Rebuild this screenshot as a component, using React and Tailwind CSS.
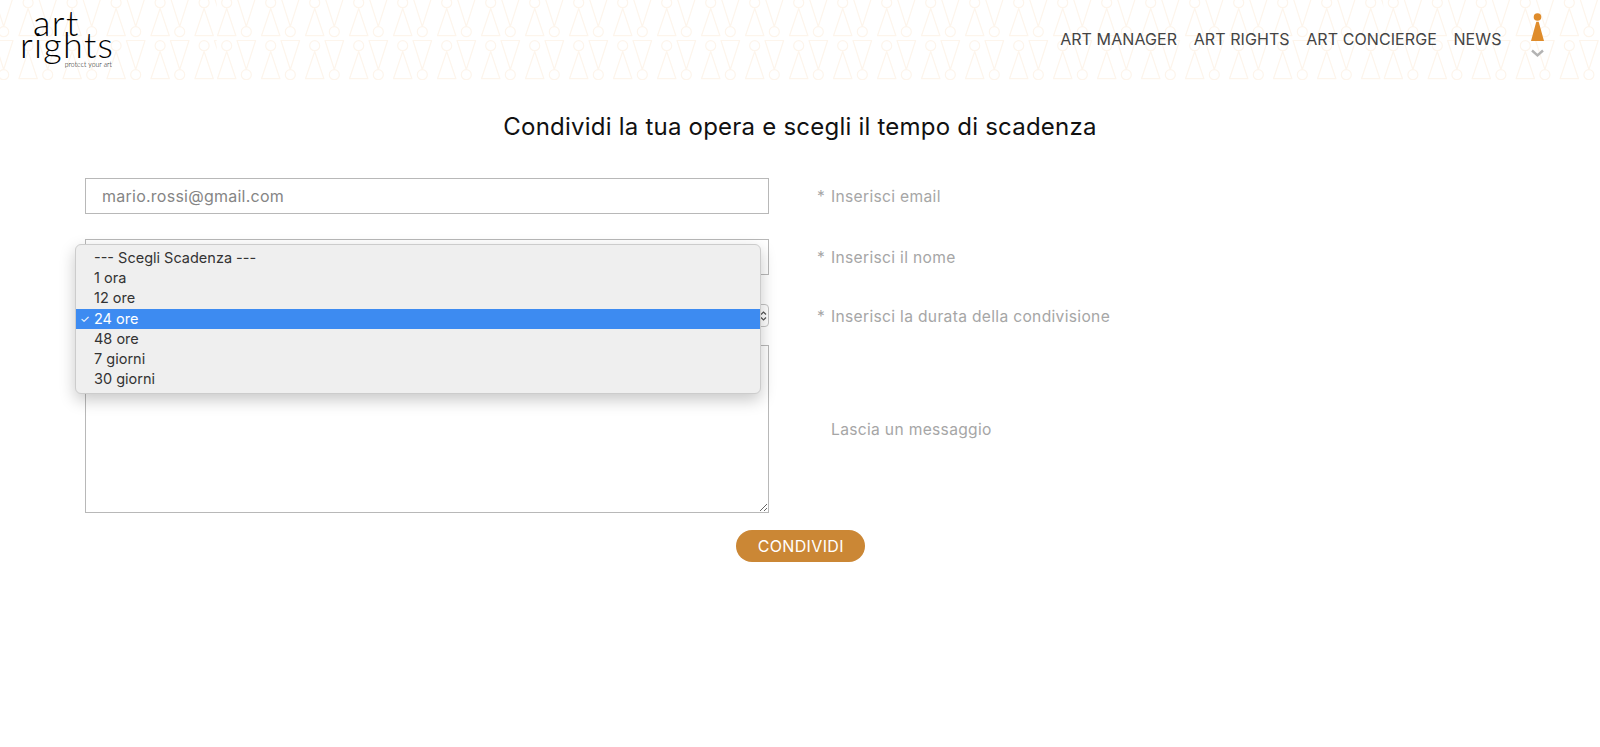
import React from "react";

const TILE = 1166.6;
const COLS = Array.from({ length: 27 }, (_, i) => i);

function PatternTile({ x }) {
  return (
    <svg x={x} y="0" width={TILE} height="80" viewBox={`0 0 ${TILE} 80`}>
      {COLS.map((i) => {
        const u = 10 + i * 44;
        const d = u + 19.6;
        return (
          <g key={i}>
            {[0, 43].map((o) => (
              <g key={o}>
                <circle cx={u} cy={2.7 + o} r="5" />
                <path d={`M${u} ${8.5 + o} L${u - 9.2} ${35.7 + o} H${u + 9.2} Z`} />
                <path d={`M${d - 9.3} ${-2.5 + o} H${d + 9.3} L${d} ${26.5 + o} Z`} />
                <circle cx={d} cy={31.7 + o} r="5" />
              </g>
            ))}
          </g>
        );
      })}
    </svg>
  );
}

function HeaderPattern() {
  return (
    <svg className="absolute inset-0 w-full h-20" width="1600" height="80" fill="none" stroke="#fdf5ec" strokeWidth="1.2" strokeLinejoin="round">
      <PatternTile x={-949.9} />
      <PatternTile x={216.7} />
      <PatternTile x={1383.3} />
    </svg>
  );
}

function Row({ label, box, h, mb }) {
  return (
    <div className={`flex items-center ${h} ${mb}`}>
      {box}
      <div className="ml-[48px] mt-[2px] flex text-[15.6px] text-[#a6a6a6] tracking-[0.32px]">
        <span className="w-[14px]">*</span>
        <span>{label}</span>
      </div>
    </div>
  );
}

const OPTIONS = ["--- Scegli Scadenza ---", "1 ora", "12 ore", "24 ore", "48 ore", "7 giorni", "30 giorni"];

export default function App() {
  return (
    <div className="min-h-[747px] bg-white font-['Inter',sans-serif]">
      <header className="relative h-20 flex items-center pl-[20px] overflow-hidden">
        <HeaderPattern />
        <div className="relative font-['Lato',sans-serif] font-light text-black w-[92px] h-[68px] leading-none">
          <div className="text-[36px] leading-[21.6px] pl-[13px] pt-[6px] tracking-[1.4px]">art</div>
          <div className="text-[36px] leading-[21.6px] tracking-[1.3px] whitespace-nowrap">rights</div>
          <div className="text-[6.8px] leading-[6px] text-right mt-[5.5px] tracking-[0.1px] whitespace-nowrap">protect your art</div>
        </div>
        <nav className="relative ml-auto mr-[39.5px] flex items-center text-[16px] text-[#444444] tracking-[0.08px]">
          <div className="flex gap-[16.6px] mb-[3px]">
            <span>ART MANAGER</span>
            <span>ART RIGHTS</span>
            <span>ART CONCIERGE</span>
            <span>NEWS</span>
          </div>
          <svg className="ml-[13px]" width="46" height="60" viewBox="0 0 46 60">
            <circle cx="22.5" cy="7" r="3.8" fill="#df8c2b" />
            <path d="M21.3 11.7 H23.7 L29 31 H16 Z" fill="#df8c2b" />
            <path d="M17 40.5 L22.5 45.5 L28 40.5" fill="none" stroke="#b3b3b3" strokeWidth="2.4" />
          </svg>
        </nav>
      </header>

      <main className="relative pl-[85px]">
        <h1 className="text-center -ml-[85px] pt-[32px] h-[98px] text-[24px] leading-[29px] text-[#111111] font-normal tracking-[0.22px]">
          Condividi la tua opera e scegli il tempo di scadenza
        </h1>

        <Row
          label="Inserisci email"
          h="h-[36px]"
          mb="mb-[25px]"
          box={
            <input
              readOnly
              value="mario.rossi@gmail.com"
              className="w-[684px] h-[36px] border border-[#b8b8b8] pl-[16px] text-[16px] text-[#858585] tracking-[0.25px] outline-none"
            />
          }
        />
        <Row
          label="Inserisci il nome"
          h="h-[36px]"
          mb="mb-[29px]"
          box={<div className="w-[684px] h-[36px] border border-[#b8b8b8]" />}
        />
        <Row
          label="Inserisci la durata della condivisione"
          h="h-[23px]"
          mb="mb-[18px]"
          box={
            <div className="w-[684px] h-[23px] border border-[#c4c4c4] rounded-[4px] flex items-center justify-end pr-[1px]">
              <svg width="7" height="14" viewBox="0 0 7 14" fill="none" stroke="#555555" strokeWidth="1.2">
                <path d="M1 5.5 L3.5 3 L6 5.5" />
                <path d="M1 8.5 L3.5 11 L6 8.5" />
              </svg>
            </div>
          }
        />
        <div className="flex items-center h-[168px]">
          <textarea readOnly className="block w-[684px] h-[168px] border border-[#b8b8b8] outline-none" />
          <div className="ml-[62px] mt-[2px] text-[15.6px] text-[#a6a6a6] tracking-[0.32px]">Lascia un messaggio</div>
        </div>

        <div className="-ml-[85px] mt-[17px] pl-[1.5px] flex justify-center">
          <button className="w-[129px] h-[32px] rounded-full bg-[#cb8735] text-white text-[16px] tracking-[0.35px]">
            CONDIVIDI
          </button>
        </div>

        <div className="absolute left-[75px] top-[164px] w-[686px] h-[150px] py-[3px] bg-[#efefef] rounded-[6px] border border-[#cccccc] shadow-[0_6px_16px_rgba(0,0,0,0.22)] text-[14.5px] text-[#333333]">
          {OPTIONS.map((o) => (
            <div
              key={o}
              className={`h-[20.2px] leading-[20px] pl-[18px] relative ${o === "24 ore" ? "bg-[#3d8bf1] text-white" : ""}`}
            >
              {o === "24 ore" && <span className="absolute left-[4px] top-0 text-[11px]">✓</span>}
              {o}
            </div>
          ))}
        </div>
      </main>
    </div>
  );
}
